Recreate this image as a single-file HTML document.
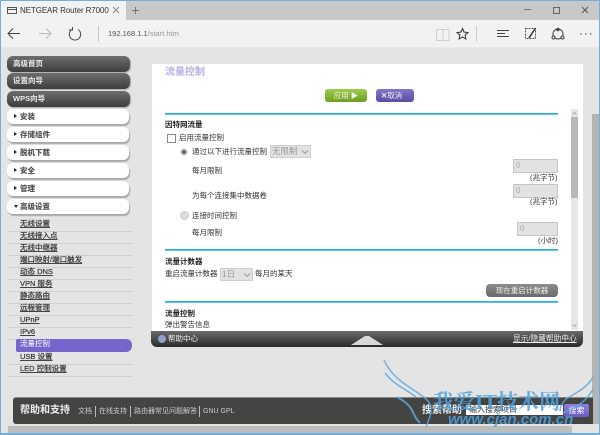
<!DOCTYPE html>
<html style="background:#e4e4e4"><head><meta charset="utf-8">
<style>
html,body{margin:0;padding:0}
body{width:600px;height:435px;overflow:hidden;position:relative;background:#e4e4e4;font-family:"Liberation Sans","Noto Sans CJK SC",sans-serif;font-size:7.5px;color:#333;filter:blur(.35px)}
div,span,svg{position:absolute;white-space:nowrap}
.d{left:7px;width:123px;height:16px;border-radius:6px;background:linear-gradient(#6e6e6e,#3e3e3e);color:#e8e8e8;line-height:15px;text-indent:6px;box-shadow:1px 1px 1px #aaa;font-weight:bold}
.w{left:7px;width:122px;height:15px;border-radius:6px;background:#fff;color:#555;line-height:15px;box-shadow:1px 2px 1px #a8a8a8;font-weight:bold}
.w i{position:absolute;left:7px;top:5px;width:0;height:0;border-left:3px solid #222;border-top:2.5px solid transparent;border-bottom:2.5px solid transparent}
.w b{position:absolute;left:13px;top:0}
.s{left:20px;color:#333;text-decoration:underline;line-height:12px;height:12px;-webkit-text-stroke:.25px #444}
.l{left:7px;width:126px;height:1px;background:#d0d0d0}
.t{color:#333;line-height:10px}
.h{color:#222;font-weight:bold;line-height:10px}
.c{left:165px;width:393px;height:1px;border-top:1px solid #2cb2de;background:#5cc4e8}
.in{background:#e2e2e2;border:1px solid #c6c6c6;box-sizing:border-box;color:#aaa;font-size:8px;line-height:11px;text-indent:2px}
.sel{background:#e2e2e2;border:1px solid #cfcfcf;box-sizing:border-box;color:#999;font-size:8.5px;line-height:11px;text-indent:1px}
</style></head><body>
<!-- window chrome -->
<div style="left:0;top:0;width:600px;height:20px;background:#c8c8c8;border-top:1px solid #6fb0e3;box-sizing:border-box"></div>
<div style="left:0;top:1px;width:126px;height:19px;background:#f2f2f2"></div>
<div style="left:0;top:20px;width:600px;height:27px;background:#f2f2f2"></div>
<div style="left:0;top:47px;width:600px;height:1px;background:#e8e8e8"></div>
<svg style="left:0;top:0" width="600" height="48" fill="none" stroke="#444" stroke-width="1">
<rect x="7.500" y="7.500" width="9" height="6" stroke="#555"/><path d="M7.500 9.500h9" stroke="#555"/>
<path d="M113 7l6 6M119 7l-6 6" stroke="#888"/>
<path d="M132 10.500h7M135.500 7v7" stroke="#777"/>
<path d="M8 33.500h12M13 28.500l-5 5 5 5"/>
<path d="M39 33.500h12M46 28.500l5 5-5 5" stroke="#bbb"/>
<path d="M72 29.500a5.700 5.700 0 1 0 6 0M72.500 27v3h-3.500" stroke="#444"/>
<path d="M98.500 26v16" stroke="#ccc"/>
<path d="M524 9.500h7" stroke="#777"/><rect x="553.500" y="7.500" width="6" height="6" stroke="#666"/><path d="M582 7l6 6M588 7l-6 6" stroke="#555"/>
<path d="M436.500 29.500h6l.5 1 .5-1h5.500v11h-6l-.5.500-.5-.5h-5.500zM443 30v10" stroke="#d0d0d0"/>
<path d="M462.500 28.500l1.600 3.600 3.900.4-2.900 2.600.8 3.900-3.400-2-3.400 2 .8-3.900-2.900-2.600 3.900-.4z" stroke="#333"/>
<path d="M476.500 26v16" stroke="#ccc"/>
<path d="M497 30.500h12M497 33.500h8M497 36.500h12"/>
<path d="M525.500 28.500h10v10h-10z" stroke="#555" stroke-dasharray="2 1"/>
<path d="M529 38l6.500-10" stroke="#333" stroke-width="1.500"/>
<circle cx="558" cy="34" r="5"/><circle cx="558" cy="29.500" r="1.200" fill="#444"/><circle cx="553.500" cy="37.500" r="1.500" fill="#f2f2f2"/><circle cx="562.500" cy="37.500" r="1.500" fill="#f2f2f2"/>
<path d="M580 34h1.500M585 34h1.500M590 34h1.500" stroke="#444"/>
<path d="M593.500 52l2-2 2 2" stroke="#bbb"/>
</svg>
<div style="left:20px;top:5px;font-size:8px;letter-spacing:-.1px;color:#333;line-height:11px">NETGEAR Router R7000</div>
<div style="left:108px;top:28px;font-size:7.5px;line-height:11px;color:#555">192.168.1.1<span style="position:static;color:#999">/start.htm</span></div>
<!-- left menu -->
<div class="d" style="top:56px">高级首页</div>
<div class="d" style="top:73px">设置向导</div>
<div class="d" style="top:91px">WPS向导</div>
<div class="w" style="top:109px"><i></i><b>安装</b></div>
<div class="w" style="top:127px"><i></i><b>存储组件</b></div>
<div class="w" style="top:145px"><i></i><b>脱机下载</b></div>
<div class="w" style="top:163px"><i></i><b>安全</b></div>
<div class="w" style="top:181px"><i></i><b>管理</b></div>
<div class="w" style="top:199px"><i style="left:7px;top:6px;border-top:3px solid #222;border-left:2.5px solid transparent;border-right:2.5px solid transparent;border-bottom:0"></i><b>高级设置</b></div>
<div class="s" style="top:218px">无线设置</div><div class="l" style="top:231px"></div>
<div class="s" style="top:230px">无线接入点</div><div class="l" style="top:243px"></div>
<div class="s" style="top:242px">无线中继器</div><div class="l" style="top:255px"></div>
<div class="s" style="top:254px">端口映射/端口触发</div><div class="l" style="top:267px"></div>
<div class="s" style="top:266px">动态 DNS</div><div class="l" style="top:279px"></div>
<div class="s" style="top:278px">VPN 服务</div><div class="l" style="top:291px"></div>
<div class="s" style="top:290px">静态路由</div><div class="l" style="top:303px"></div>
<div class="s" style="top:302px">远程管理</div><div class="l" style="top:315px"></div>
<div class="s" style="top:314px">UPnP</div><div class="l" style="top:327px"></div>
<div class="s" style="top:326px">IPv6</div><div class="l" style="top:339px"></div>
<div style="left:16px;top:339px;width:116px;height:13px;background:#7566cc;border-radius:2px 6px 6px 2px"></div>
<div class="s" style="top:338px;color:#fff;left:20px;text-decoration:none;-webkit-text-stroke:0">流量控制</div>
<div class="s" style="top:351px">USB 设置</div><div class="l" style="top:364px"></div>
<div class="s" style="top:363px">LED 控制设置</div><div class="l" style="top:376px"></div>
<!-- content -->
<div style="left:152px;top:64px;width:431px;height:268px;background:#fff"></div>
<div style="left:165px;top:66px;font-size:10px;line-height:13px;color:#b5aee0;font-weight:bold">流量控制</div>
<div style="left:325px;top:89px;width:42px;height:13px;border-radius:3px;background:linear-gradient(#9ecb4a,#6f9e24);color:#f0f6e0;text-align:center;line-height:13px">应用 ▶</div>
<div style="left:376px;top:89px;width:38px;height:13px;border-radius:3px;background:linear-gradient(#8376c8,#5a4ca6);color:#eee;line-height:13px;text-indent:5px"><span style="position:static;font-weight:bold">✕</span>取消</div>
<div class="c" style="top:113px"></div>
<div class="h" style="left:165px;top:120px">因特网流量</div>
<div style="left:167px;top:134px;width:7px;height:7px;border:1px solid #888;background:#fff"></div>
<div class="t" style="left:179px;top:133px">启用流量控制</div>
<div style="left:180px;top:148px;width:8px;height:8px;border-radius:50%;background:radial-gradient(circle,#666 0 2px,#ddd 2.500px)"></div>
<div class="t" style="left:192px;top:147px">通过以下进行流量控制</div>
<div class="sel" style="left:270px;top:145px;width:41px;height:13px">无限制</div>
<svg style="left:301px;top:149px" width="8" height="6" fill="none" stroke="#999"><path d="M1 1.500l3 3 3-3"/></svg>
<div class="t" style="left:192px;top:166px">每月限制</div>
<div class="in" style="left:513px;top:159px;width:45px;height:14px">0</div>
<div class="t" style="left:530px;top:173px">(兆字节)</div>
<div class="t" style="left:192px;top:191px">为每个连接集中数据卷</div>
<div class="in" style="left:513px;top:184px;width:45px;height:14px">0</div>
<div class="t" style="left:530px;top:197px">(兆字节)</div>
<div style="left:180px;top:211px;width:7px;height:7px;border-radius:50%;background:#ddd;border:.5px solid #ccc"></div>
<div class="t" style="left:192px;top:211px">连接时间控制</div>
<div class="t" style="left:192px;top:228px">每月限制</div>
<div class="in" style="left:517px;top:222px;width:41px;height:14px">0</div>
<div class="t" style="left:538px;top:236px">(小时)</div>
<div class="c" style="top:249px"></div>
<div class="h" style="left:165px;top:257px">流量计数器</div>
<div class="t" style="left:165px;top:269px">重启流量计数器</div>
<div class="sel" style="left:220px;top:268px;width:33px;height:13px">1日</div>
<svg style="left:243px;top:272px" width="8" height="6" fill="none" stroke="#999"><path d="M1 1.500l3 3 3-3"/></svg>
<div class="t" style="left:255px;top:269px">每月的某天</div>
<div style="left:486px;top:284px;width:72px;height:13px;border-radius:4px;background:linear-gradient(#8c8c8c,#6a6a6a);color:#eee;text-align:center;line-height:13px">现在重启计数器</div>
<div class="c" style="top:301px"></div>
<div class="h" style="left:165px;top:309px">流量控制</div>
<div class="t" style="left:165px;top:320px">弹出警告信息</div>
<!-- inner scrollbar -->
<div style="left:571px;top:109px;width:7px;height:221px;background:#e6e6e6"></div>
<div style="left:571px;top:117px;width:7px;height:81px;background:#b8b8b8"></div>
<svg style="left:571px;top:109px" width="7" height="221" fill="none" stroke="#aaa"><path d="M1.500 5.500l2-2 2 2M1.500 215.500l2 2 2-2"/></svg>
<!-- help bar -->
<div style="left:151px;top:331px;width:432px;height:16px;background:linear-gradient(#6a6a6a,#2a2a2a);border-radius:0 0 6px 6px"></div>
<div style="left:158px;top:335px;width:8px;height:8px;border-radius:50%;background:#8fa0d0"></div>
<div style="left:168px;top:333px;color:#eee;line-height:12px">帮助中心</div>
<svg style="left:351px;top:335px" width="32" height="11"><path d="M0 10L14 1h4L32 10z" fill="#d8d8d8"/></svg>
<div style="left:513px;top:333px;color:#eee;line-height:12px;text-decoration:underline;font-size:7.700px">显示/隐藏帮助中心</div>
<!-- page scrollbars -->
<div style="left:592px;top:114px;width:7px;height:310px;background:#b4b4b4"></div>
<div style="left:8px;top:426px;width:564px;height:7px;background:#bdbdbd"></div>
<div style="left:572px;top:426px;width:27px;height:7px;background:#e4e4e4"></div>
<!-- footer -->
<div style="left:13px;top:397px;width:580px;height:27px;background:#444442;border-radius:3px 0 0 3px;border-top:1px solid #888;box-sizing:border-box"></div>
<div style="left:20px;top:404px;font-size:10px;line-height:13px;color:#eee;font-weight:bold">帮助和支持</div>
<div style="left:78px;top:406px;color:#ccc;line-height:12px;font-size:7px">文档</div>
<div style="left:95px;top:406px;width:1px;height:11px;background:#bbb"></div>
<div style="left:99px;top:406px;color:#ccc;line-height:12px;font-size:7px">在线支持</div>
<div style="left:130px;top:406px;width:1px;height:11px;background:#bbb"></div>
<div style="left:134px;top:406px;color:#ccc;line-height:12px;font-size:7px">路由器常见问题解答</div>
<div style="left:199px;top:406px;width:1px;height:11px;background:#bbb"></div>
<div style="left:203px;top:406px;color:#ccc;line-height:12px;font-size:7px">GNU GPL</div>
<div style="left:422px;top:404px;font-size:10px;line-height:13px;color:#eee;font-weight:bold">搜索帮助</div>
<div style="left:466px;top:405px;width:97px;height:10px;background:#fff;color:#333;line-height:10px;font-size:8px;text-indent:3px">输入搜索项目</div>
<div style="left:564px;top:404px;width:25px;height:13px;background:linear-gradient(#8b7fdc,#6a5cc0);border-radius:2px;color:#fff;text-align:center;line-height:13px;font-size:8px">搜索</div>
<!-- edges -->
<div style="left:0;top:0;width:1px;height:435px;background:#6fb0e3"></div>
<div style="left:599px;top:0;width:1px;height:435px;background:#6fb0e3"></div>
<div style="left:0;top:433px;width:600px;height:2px;background:#6fb0e3"></div>
<!-- watermark -->
<svg style="left:380px;top:355px" width="220" height="80" fill="none" stroke="#5aa9e0" stroke-width="1.500" opacity=".85">
<path d="M4 5C14 28 38 35 48 46C54 54 50 62 46 72"/>
<path d="M5 18C14 30 26 34 36 42"/>
<path d="M17 42c8 4 12 8 15 13c2 5 4 9 8 13" stroke-width="2"/>
<path d="M213 22C208 32 196 38 186 44C182 48 180 52 180 56"/>
<path d="M213 34c-6 12-16 18-30 24"/>
</svg>
<div style="left:433px;top:390px;font-size:21px;line-height:24px;color:#4fa3e0;opacity:.85;font-weight:bold;font-family:'Liberation Serif','Noto Serif CJK SC',serif">我爱IT技术网</div>
<div style="left:448px;top:411px;font-size:15px;line-height:17px;color:#4fa3e0;opacity:.85;font-weight:bold;font-style:italic">www.cjan.com.cn</div>
</body></html>
